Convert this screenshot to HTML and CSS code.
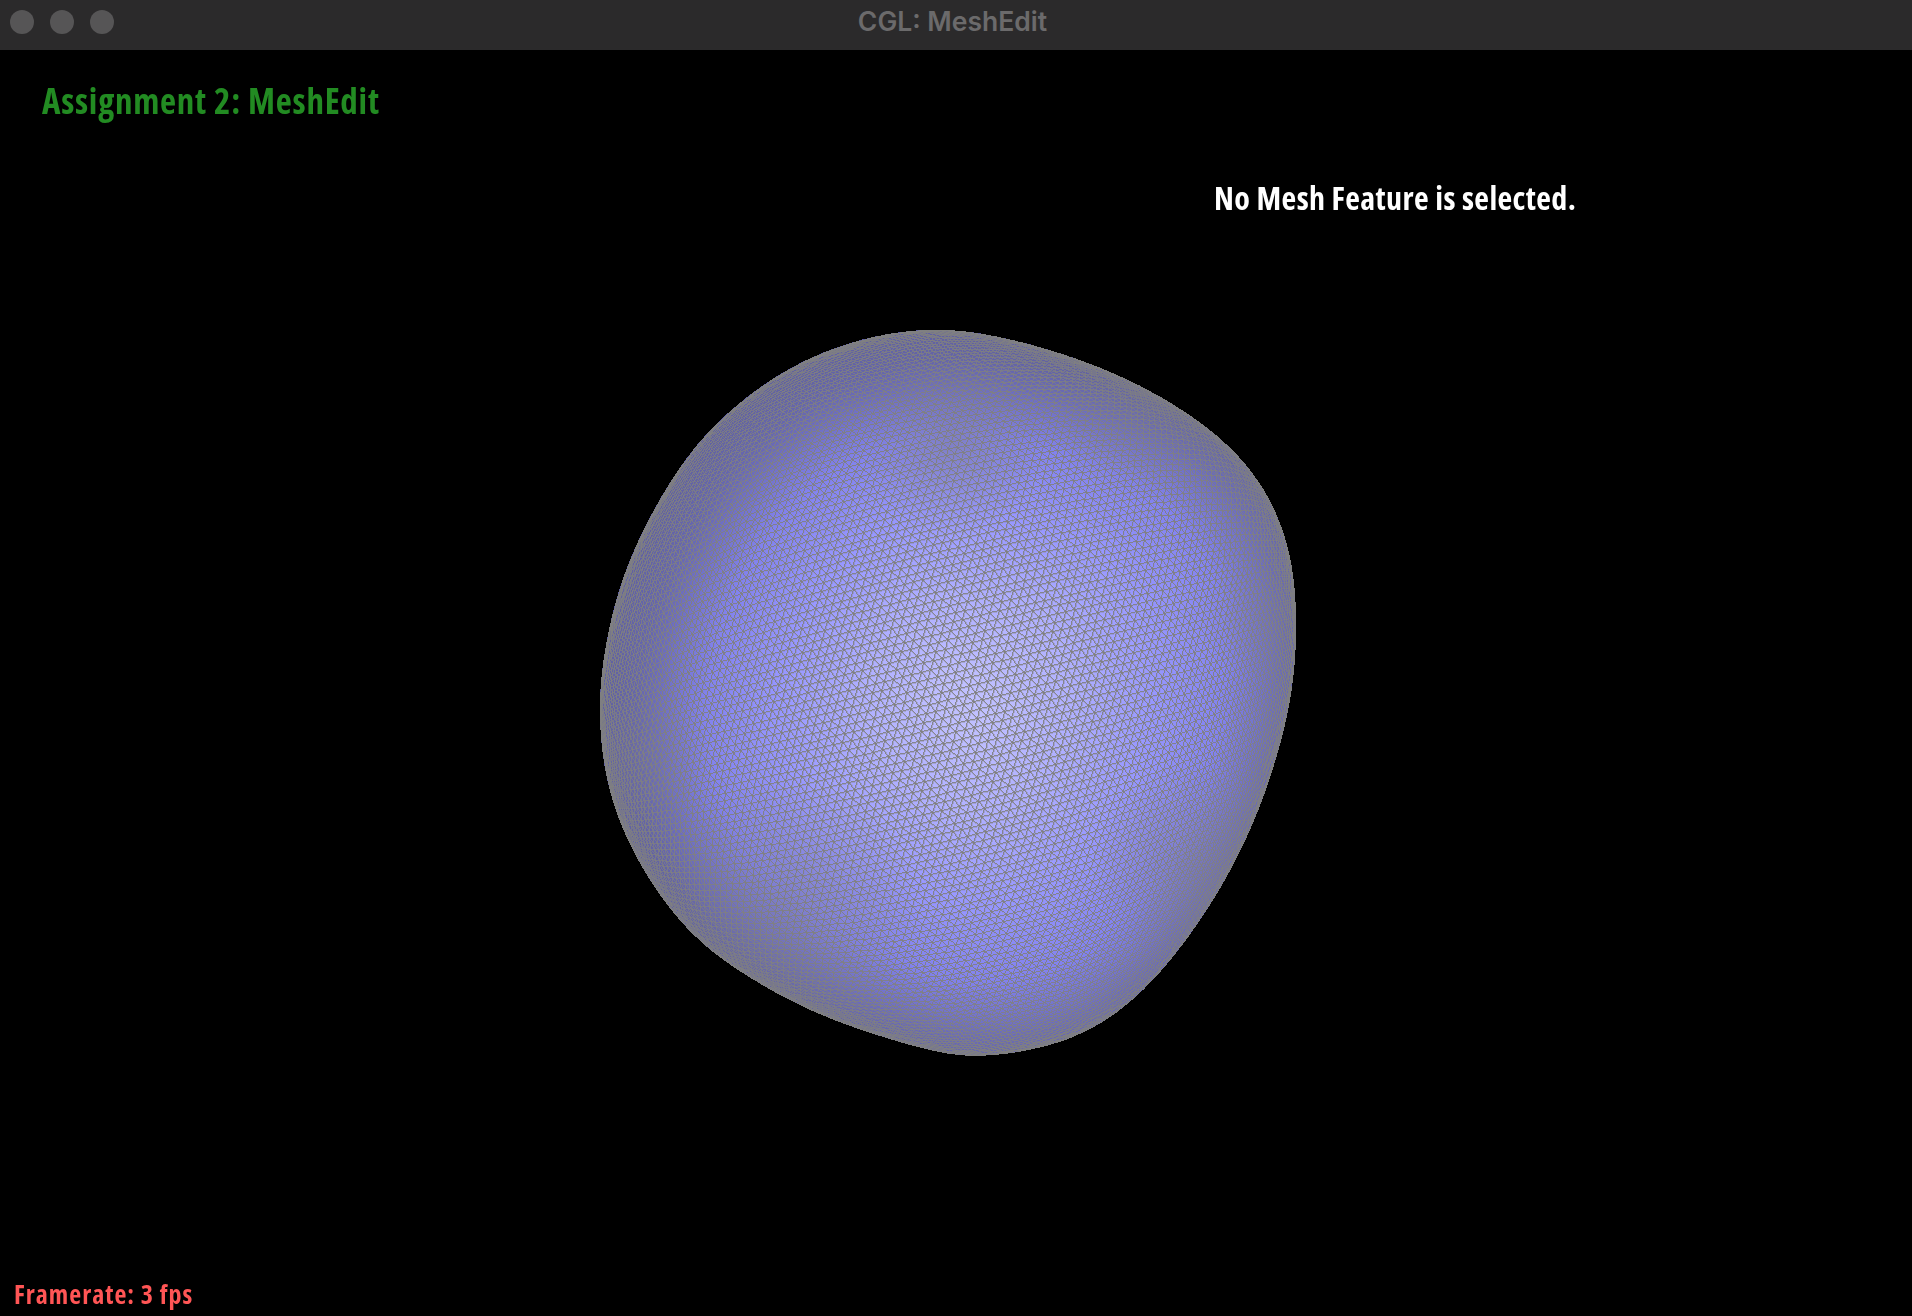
FILE: index.html
```html
<!DOCTYPE html>
<html lang="en">
<head>
<meta charset="utf-8">
<title>CGL: MeshEdit</title>
<link rel="stylesheet" href="styles.css">
</head>
<body>
<div class="window">
  <header class="titlebar">
    <div class="lights"><span class="light"></span><span class="light"></span><span class="light"></span></div>
    <div class="window-title">CGL: MeshEdit</div>
  </header>
  <main class="viewport">
    <canvas class="mesh" id="mesh" width="1912" height="1266"></canvas>
    <h1 class="assignment">Assignment 2: MeshEdit</h1>
    <p class="status">No Mesh Feature is selected.</p>
    <p class="framerate">Framerate: 3 fps</p>
  </main>
</div>
<script src="mesh.js"></script>
</body>
</html>
```
FILE: styles.css
```css
html,body{margin:0;padding:0;height:100%;background:#000;overflow:hidden}
.window{display:flex;flex-direction:column;width:1912px;height:1316px}
.titlebar{flex:none;height:50px;background:#2b2a2b;position:relative;display:flex;align-items:center}
.lights{display:flex;gap:16px;padding:0 0 6px 10px}
.light{width:24px;height:24px;border-radius:50%;background:#565556}
.window-title{position:absolute;left:0;right:7px;top:6px;text-align:center;font:600 26.5px/30px Inter,"Liberation Sans",sans-serif;color:#6b6a6b}
.viewport{flex:1;position:relative;background:#000;font-family:"Open Sans","Noto Sans",sans-serif;font-weight:700;font-stretch:75%}
.mesh{position:absolute;left:0;top:0;width:1912px;height:1266px}
.assignment{position:absolute;left:42px;top:28px;margin:0;font-size:35px;line-height:46px;font-weight:700;letter-spacing:.75px;color:#228b22}
.status{position:absolute;left:1214px;top:127px;margin:0;font-size:32px;line-height:42px;letter-spacing:.41px;color:#fff}
.framerate{position:absolute;left:14px;top:1227px;margin:0;font-size:26px;line-height:34px;letter-spacing:1px;color:#ff5555}
```
FILE: mesh.js
```js
(function () {
  var OFFSET_Y = 50; // canvas starts under the title bar
  var W = 1912, H = 1266;
  var outline = [
    [950,330],[993,337],[1040,348],[1090,365],[1133,383],[1177,408],[1213,433],[1243,462],
    [1267,495],[1283,533],[1292,570],[1296,620],[1293,687],[1280,740],[1265,790],[1245,840],
    [1217,893],[1183,943],[1147,987],[1107,1020],[1067,1040],[1017,1052],[973,1055],[950,1053],
    [907,1043],[857,1027],[803,1007],[757,980],[713,953],[680,920],[650,880],[623,830],
    [608,783],[602,740],[600,690],[608,640],[618,597],[633,553],[657,507],
    [683,463],[713,428],[747,398],[783,373],[823,353],[870,338],[910,332]
  ];
  var cx = 950, cy = 690, GROW = 1.006;

  // Resample the outline densely, then low-pass it so hand-read points leave no lumps.
  var dense = [], n = outline.length;
  for (var i = 0; i < n; i++) {
    var p1 = outline[i], p2 = outline[(i + 1) % n];
    for (var k = 0; k < 10; k++) {
      dense.push([p1[0] + (p2[0] - p1[0]) * k / 10, p1[1] + (p2[1] - p1[1]) * k / 10]);
    }
  }
  var smooth = [], span = 14, total = dense.length;
  for (var m = 0; m < total; m++) {
    var sx = 0, sy = 0, sw = 0;
    for (var o2 = -span; o2 <= span; o2++) {
      var wt = span + 1 - Math.abs(o2), pt = dense[(m + o2 + total) % total];
      sx += pt[0] * wt; sy += pt[1] * wt; sw += wt;
    }
    smooth.push([cx + (sx / sw - cx) * GROW, cy + (sy / sw - cy) * GROW]);
  }

  // Boundary radius by angle around the centre.
  var BINS = 1440, raw = new Array(BINS).fill(0);
  smooth.forEach(function (p, idx) {
    var q = smooth[(idx + 1) % smooth.length];
    for (var s = 0; s < 6; s++) {
      var x = p[0] + (q[0] - p[0]) * s / 6 - cx, y = p[1] + (q[1] - p[1]) * s / 6 - cy;
      var b = Math.round((Math.atan2(y, x) + Math.PI) / (2 * Math.PI) * BINS) % BINS;
      raw[b] = Math.max(raw[b], Math.hypot(x, y));
    }
  });
  for (var b = 0; b < BINS * 2; b++) {
    if (!raw[b % BINS]) raw[b % BINS] = raw[(b + BINS - 1) % BINS];
  }
  function boundary(a) {
    return raw[Math.round((a + Math.PI) / (2 * Math.PI) * BINS) % BINS];
  }

  var ctx = document.getElementById('mesh').getContext('2d');

  // The blob's silhouette, drawn once to read back which pixels lie inside.
  ctx.fillStyle = '#fff';
  ctx.beginPath();
  smooth.forEach(function (p, idx) {
    if (idx) ctx.lineTo(p[0], p[1] - OFFSET_Y); else ctx.moveTo(p[0], p[1] - OFFSET_Y);
  });
  ctx.closePath();
  ctx.fill();
  var img = ctx.getImageData(0, 0, W, H), px = img.data;

  // Shade: light lavender in the middle, saturated blue, then dimmer towards the rim.
  var stops = [
    [0, 196, 196, 255], [0.3, 176, 176, 255], [0.55, 150, 150, 255],
    [0.75, 130, 130, 238], [0.9, 108, 108, 186], [1, 96, 96, 160]
  ];
  function ramp(t) {
    for (var i = 1; i < stops.length; i++) {
      if (t <= stops[i][0]) {
        var a = stops[i - 1], c = stops[i], f = (t - a[0]) / (c[0] - a[0]);
        return [a[1] + (c[1] - a[1]) * f, a[2] + (c[2] - a[2]) * f, a[3] + (c[3] - a[3]) * f];
      }
    }
    return stops[stops.length - 1].slice(1);
  }
  // Patches where the reference mesh bunches up and reads as grey.
  var patches = [
    [790, 905, 130, 0.4], [1190, 860, 100, 0.4], [953, 445, 90, 0.45],
    [640, 760, 70, 0.25], [1260, 620, 60, 0.2], [1130, 420, 80, 0.2]
  ];
  for (var y = 0; y < H; y++) {
    var py = y + OFFSET_Y;
    for (var x = 500; x < 1400; x++) {
      var o = (y * W + x) * 4;
      if (px[o + 3] < 128) { px[o + 3] = 0; continue; }
      var dx = x - cx, dy = py - cy, ang = Math.atan2(dy, dx), R = boundary(ang);
      var q = Math.hypot(dx, dy) / R;
      var q2 = Math.min(1, Math.hypot(x - 985, py - 716) / R);
      var c = ramp(Math.min(1, 0.45 * q + 0.55 * q2));
      for (var g = 0; g < patches.length; g++) {
        var pa = patches[g], d = Math.hypot(x - pa[0], py - pa[1]) / pa[2];
        if (d < 1) {
          var w = pa[3] * (1 - d);
          c[0] += (122 - c[0]) * w; c[1] += (122 - c[1]) * w; c[2] += (150 - c[2]) * w;
        }
      }
      px[o] = c[0]; px[o + 1] = c[1]; px[o + 2] = c[2]; px[o + 3] = 255;
    }
  }

  function plot(x, y, alpha) {
    if (x < 0 || y < 0 || x >= W || y >= H) return;
    var o = (y * W + x) * 4;
    if (!px[o + 3]) return;
    px[o] += (128 - px[o]) * alpha;
    px[o + 1] += (128 - px[o + 1]) * alpha;
    px[o + 2] += (128 - px[o + 2]) * alpha;
  }

  // Aliased line, thickened a little inside where the mesh is sparse.
  function line(a, c, main, extra) {
    var x0 = Math.round(a[0]), y0 = Math.round(a[1] - OFFSET_Y);
    var x1 = Math.round(c[0]), y1 = Math.round(c[1] - OFFSET_Y);
    var sx = x0 < x1 ? 1 : -1, sy = y0 < y1 ? 1 : -1;
    var ax = Math.abs(x1 - x0), ay = Math.abs(y1 - y0), err = ax - ay;
    var steep = ay > ax;
    for (;;) {
      plot(x0, y0, main);
      if (extra > 0) {
        if (steep) plot(x0 + 1, y0, extra); else plot(x0, y0 + 1, extra);
      }
      if (x0 === x1 && y0 === y1) break;
      var e2 = 2 * err;
      if (e2 > -ay) { err -= ay; x0 += sx; }
      if (e2 < ax) { err += ax; y0 += sy; }
    }
  }

  // Triangular lattice wrapped over the visible hemisphere.
  var pitch = 9.6, rot = -14 * Math.PI / 180, h = pitch * Math.sqrt(3) / 2;
  var cosR = Math.cos(rot), sinR = Math.sin(rot);
  function project(i, j) {
    var u = (i + j / 2) * pitch, v = j * h;
    var vx = u * cosR - v * sinR, vy = u * sinR + v * cosR;
    var rp = Math.hypot(vx, vy), a = Math.atan2(vy, vx), R = boundary(a);
    var s = rp / (R * Math.PI / 2);
    if (s > 1) return null;
    var r = R * Math.sin(s * Math.PI / 2);
    return [cx + r * Math.cos(a), cy + r * Math.sin(a), r / R];
  }
  var dirs = [[1, 0], [0, 1], [-1, 1]], N = 90;
  for (var ii = -N; ii <= N; ii++) {
    for (var jj = -N; jj <= N; jj++) {
      var a0 = project(ii, jj);
      if (!a0) continue;
      for (var e = 0; e < 3; e++) {
        var a1 = project(ii + dirs[e][0], jj + dirs[e][1]);
        if (!a1) continue;
        var extra = Math.max(0, Math.min(1, (0.75 - a0[2]) / 0.35)) * 0.35;
        var main = 0.9 - 0.2 * Math.max(0, Math.min(1, (a0[2] - 0.78) / 0.2));
        line(a0, a1, main, extra);
      }
    }
  }
  ctx.putImageData(img, 0, 0);
})();
```
